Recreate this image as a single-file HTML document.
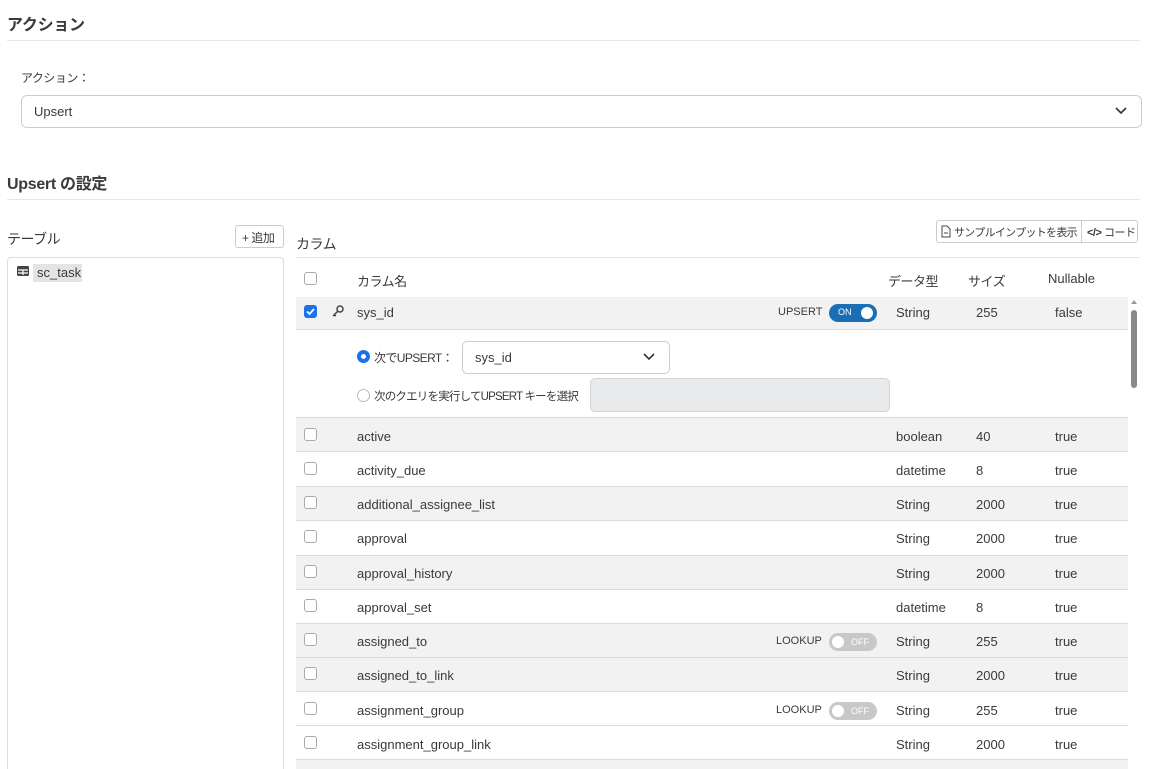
<!DOCTYPE html>
<html><head><meta charset="utf-8"><style>
*{box-sizing:border-box;margin:0;padding:0}
html,body{width:1155px;height:769px;overflow:hidden}
body{background:#fff;font-family:"Liberation Sans","Noto Sans CJK JP",sans-serif;color:#3a3a3a;position:relative;font-size:13px}
.a{position:absolute;white-space:nowrap}
.h{font-size:16px;font-weight:bold;color:#3a3a3a;letter-spacing:-0.3px}
.line{position:absolute;height:1px;background:#e6e6e6}
.cb{position:absolute;width:13px;height:13px;border:1px solid #aaa;border-radius:3px;background:#fff}
.row{position:absolute;left:296px;width:832px;border-bottom:1px solid #dcdcdc}
.g{background:#f2f2f2}
.tg{position:absolute;width:48px;height:18px;border-radius:9px;font-size:9px;color:#fff}
.tg.on{background:#1a6fb4}
.tg.off{background:#c8c8c8}
.tg i{position:absolute;top:3px;width:12px;height:12px;border-radius:50%;background:#fff}
.j{letter-spacing:-0.5px}
</style></head><body>
<div class="a h" style="left:7px;top:11px">アクション</div>
<div class="line" style="left:7px;top:40px;width:1133px"></div>
<div class="a j" style="left:21px;top:69px;font-size:12px">アクション：</div>
<div class="a" style="left:21px;top:95px;width:1121px;height:33px;border:1px solid #ccc;border-radius:6px"></div>
<div class="a" style="left:34px;top:104px">Upsert</div>
<svg class="a" style="left:1114px;top:106px" width="14" height="10"><path d="M2 2l5 5 5-5" stroke="#333" stroke-width="1.6" fill="none"/></svg>
<div class="a h" style="left:7px;top:170px">Upsert の設定</div>
<div class="line" style="left:7px;top:199px;width:1133px"></div>

<div class="a j" style="left:7px;top:229px;font-size:14px">テーブル</div>
<div class="a j" style="left:235px;top:225px;width:49px;height:23px;border:1px solid #ccc;border-radius:3px;font-size:12px;padding:3px 0 0 6px">+ 追加</div>
<div class="a" style="left:7px;top:257px;width:277px;height:520px;border:1px solid #ddd;border-radius:4px"></div>
<svg class="a" style="left:16px;top:265px" width="14" height="12"><rect x="1" y="1" width="12" height="10" rx="1.5" fill="#444"/><path d="M2 5h10M2 8h10M7 5v5" stroke="#fff" stroke-width="1.2"/></svg>
<div class="a" style="left:33px;top:264px;width:49px;height:18px;background:#e4e4e4;padding:1px 0 0 4px">sc_task</div>

<div class="a j" style="left:296px;top:234px;font-size:14px">カラム</div>
<div class="a" style="left:936px;top:220px;width:202px;height:23px;border:1px solid #ccc;border-radius:3px"></div>
<div class="a" style="left:1081px;top:220px;width:1px;height:23px;background:#ccc"></div>
<svg class="a" style="left:941px;top:225px" width="10" height="13"><path d="M1 1h5l3 3v8H1z" fill="none" stroke="#444"/><path d="M3 8h4" stroke="#444"/></svg>
<div class="a" style="left:954px;top:224px;font-size:11px;letter-spacing:-0.7px">サンプルインプットを表示</div>
<div class="a" style="left:1087px;top:224px;font-size:11px;letter-spacing:-0.5px"><b>&lt;/&gt;</b> コード</div>
<div class="line" style="left:296px;top:257px;width:844px"></div>

<div class="cb" style="left:304px;top:272px"></div>
<div class="a j" style="left:357px;top:271px">カラム名</div>
<div class="a j" style="left:888px;top:271px">データ型</div>
<div class="a j" style="left:968px;top:271px">サイズ</div>
<div class="a" style="left:1048px;top:271px">Nullable</div>

<div class="row g" style="top:297px;height:33px"></div>
<div class="a" style="left:304px;top:305px;width:13px;height:13px;border-radius:3px;background:#1a73e8"></div>
<svg class="a" style="left:304px;top:305px" width="13" height="13"><path d="M3 6.5l2.5 2.5 4.5-5" stroke="#fff" stroke-width="1.7" fill="none"/></svg>
<svg class="a" style="left:331px;top:304px" width="14" height="14"><circle cx="9" cy="5" r="3" fill="none" stroke="#444" stroke-width="1.5"/><path d="M7 7l-5 5M3 11l2 1" stroke="#444" stroke-width="1.5"/></svg>
<div class="a" style="left:357px;top:305px">sys_id</div>
<div class="a" style="left:778px;top:306px;font-size:11px">UPSERT</div>
<div class="tg on" style="left:829px;top:304px"><span class="a" style="left:9px;top:3px">ON</span><i style="left:32px"></i></div>
<div class="a" style="left:896px;top:305px">String</div><div class="a" style="left:976px;top:305px">255</div><div class="a" style="left:1055px;top:305px">false</div>

<div class="row" style="top:330px;height:88px"></div>
<div class="a" style="left:357px;top:350px;width:13px;height:13px;border-radius:50%;border:4px solid #1a73e8"></div>
<div class="a" style="left:374px;top:349px;font-size:12px;letter-spacing:-0.6px">次でUPSERT：</div>
<div class="a" style="left:462px;top:341px;width:208px;height:33px;border:1px solid #ccc;border-radius:5px"></div>
<div class="a" style="left:475px;top:350px">sys_id</div>
<svg class="a" style="left:642px;top:352px" width="14" height="10"><path d="M2 2l5 5 5-5" stroke="#333" stroke-width="1.6" fill="none"/></svg>
<div class="a" style="left:357px;top:389px;width:13px;height:13px;border-radius:50%;border:1px solid #bbb"></div>
<div class="a" style="left:374px;top:388px;font-size:11.5px;letter-spacing:-0.8px">次のクエリを実行してUPSERT キーを選択</div>
<div class="a" style="left:590px;top:378px;width:300px;height:34px;background:#e9eaec;border:1px solid #d5d5d5;border-radius:5px"></div>

<div class="row g" style="top:418px;height:34px"></div>
<div class="row" style="top:452px;height:35px"></div>
<div class="row g" style="top:487px;height:34px"></div>
<div class="row" style="top:521px;height:35px"></div>
<div class="row g" style="top:556px;height:34px"></div>
<div class="row" style="top:590px;height:34px"></div>
<div class="row g" style="top:624px;height:34px"></div>
<div class="row g" style="top:658px;height:34px"></div>
<div class="row" style="top:692px;height:34px"></div>
<div class="row" style="top:726px;height:34px"></div>
<div class="row g" style="top:760px;height:20px"></div>

<div class="cb" style="left:304px;top:428px"></div><div class="a" style="left:357px;top:429px">active</div><div class="a" style="left:896px;top:429px">boolean</div><div class="a" style="left:976px;top:429px">40</div><div class="a" style="left:1055px;top:429px">true</div>
<div class="cb" style="left:304px;top:462px"></div><div class="a" style="left:357px;top:463px">activity_due</div><div class="a" style="left:896px;top:463px">datetime</div><div class="a" style="left:976px;top:463px">8</div><div class="a" style="left:1055px;top:463px">true</div>
<div class="cb" style="left:304px;top:496px"></div><div class="a" style="left:357px;top:497px">additional_assignee_list</div><div class="a" style="left:896px;top:497px">String</div><div class="a" style="left:976px;top:497px">2000</div><div class="a" style="left:1055px;top:497px">true</div>
<div class="cb" style="left:304px;top:530px"></div><div class="a" style="left:357px;top:531px">approval</div><div class="a" style="left:896px;top:531px">String</div><div class="a" style="left:976px;top:531px">2000</div><div class="a" style="left:1055px;top:531px">true</div>
<div class="cb" style="left:304px;top:565px"></div><div class="a" style="left:357px;top:566px">approval_history</div><div class="a" style="left:896px;top:566px">String</div><div class="a" style="left:976px;top:566px">2000</div><div class="a" style="left:1055px;top:566px">true</div>
<div class="cb" style="left:304px;top:599px"></div><div class="a" style="left:357px;top:600px">approval_set</div><div class="a" style="left:896px;top:600px">datetime</div><div class="a" style="left:976px;top:600px">8</div><div class="a" style="left:1055px;top:600px">true</div>
<div class="cb" style="left:304px;top:633px"></div><div class="a" style="left:357px;top:634px">assigned_to</div><div class="a" style="left:896px;top:634px">String</div><div class="a" style="left:976px;top:634px">255</div><div class="a" style="left:1055px;top:634px">true</div>
<div class="a" style="left:776px;top:635px;font-size:11px">LOOKUP</div>
<div class="tg off" style="left:829px;top:633px"><i style="left:3px"></i><span class="a" style="left:22px;top:4px">OFF</span></div>
<div class="cb" style="left:304px;top:667px"></div><div class="a" style="left:357px;top:668px">assigned_to_link</div><div class="a" style="left:896px;top:668px">String</div><div class="a" style="left:976px;top:668px">2000</div><div class="a" style="left:1055px;top:668px">true</div>
<div class="cb" style="left:304px;top:702px"></div><div class="a" style="left:357px;top:703px">assignment_group</div><div class="a" style="left:896px;top:703px">String</div><div class="a" style="left:976px;top:703px">255</div><div class="a" style="left:1055px;top:703px">true</div>
<div class="a" style="left:776px;top:704px;font-size:11px">LOOKUP</div>
<div class="tg off" style="left:829px;top:702px"><i style="left:3px"></i><span class="a" style="left:22px;top:4px">OFF</span></div>
<div class="cb" style="left:304px;top:736px"></div><div class="a" style="left:357px;top:737px">assignment_group_link</div><div class="a" style="left:896px;top:737px">String</div><div class="a" style="left:976px;top:737px">2000</div><div class="a" style="left:1055px;top:737px">true</div>

<svg class="a" style="left:1130px;top:299px" width="8" height="6"><path d="M1 5l3-4 3 4z" fill="#999"/></svg>
<div class="a" style="left:1131px;top:310px;width:6px;height:78px;border-radius:3px;background:#8a8a8a"></div>
</body></html>
